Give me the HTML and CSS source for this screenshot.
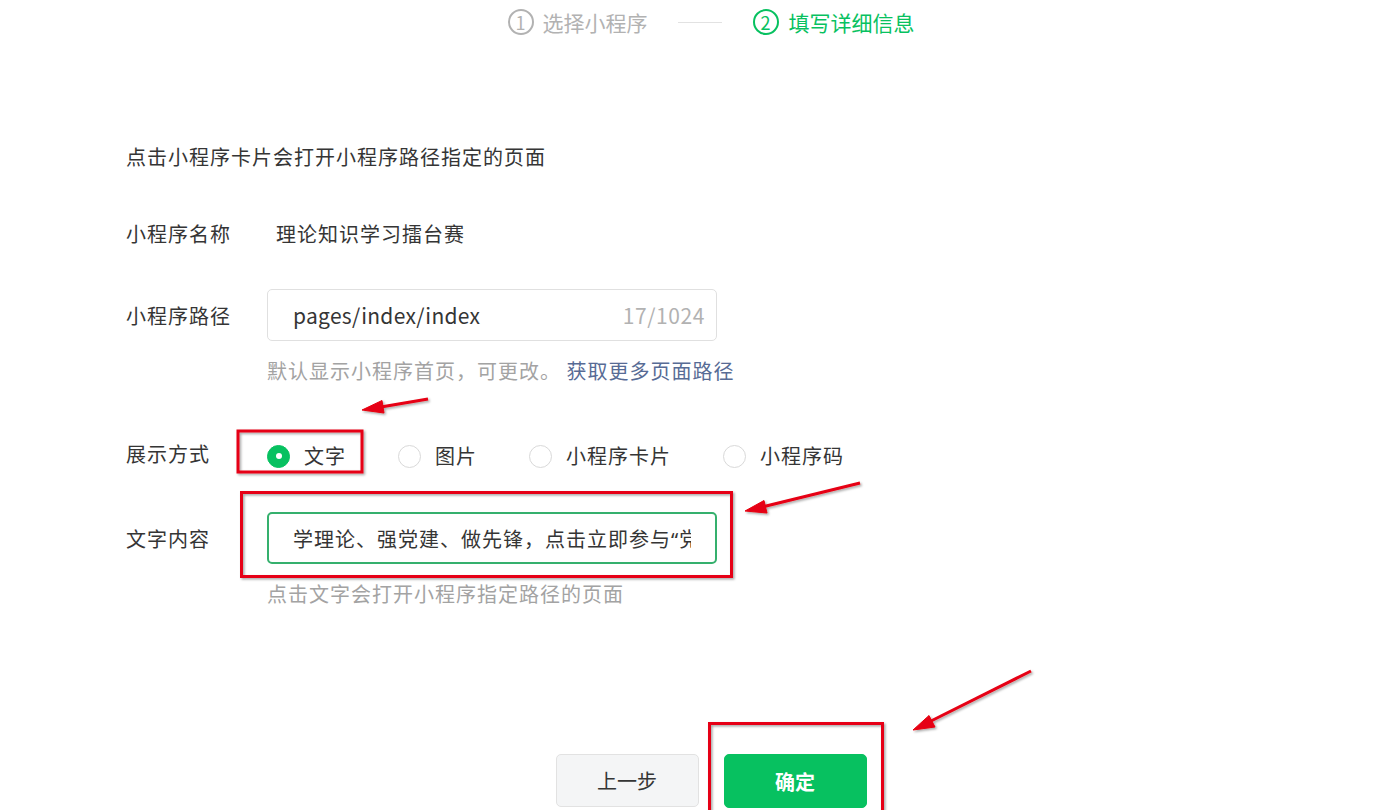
FILE: index.html
```html
<!DOCTYPE html>
<html lang="zh-CN">
<head>
<meta charset="utf-8">
<title>填写详细信息</title>
<link rel="stylesheet" href="styles.css">
</head>
<body>
<div class="page">
  <div class="steps">
    <div class="step done">
      <span class="step-num">1</span>
      <span class="step-text">选择小程序</span>
    </div>
    <div class="step-line"></div>
    <div class="step active">
      <span class="step-num">2</span>
      <span class="step-text">填写详细信息</span>
    </div>
  </div>

  <div class="form">
    <p class="desc">点击小程序卡片会打开小程序路径指定的页面</p>

    <div class="row row-name">
      <div class="label">小程序名称</div>
      <div class="value">理论知识学习擂台赛</div>
    </div>

    <div class="row row-input">
      <div class="label">小程序路径</div>
      <div class="input">
        <span class="input-text">pages/index/index</span>
        <span class="counter">17/1024</span>
      </div>
    </div>
    <div class="hint">默认显示小程序首页，可更改。 <a class="link">获取更多页面路径</a></div>

    <div class="row row-radio">
      <div class="label">展示方式</div>
      <div class="radios">
        <label class="radio checked"><span class="dot"></span>文字</label>
        <label class="radio"><span class="dot"></span>图片</label>
        <label class="radio"><span class="dot"></span>小程序卡片</label>
        <label class="radio"><span class="dot"></span>小程序码</label>
      </div>
    </div>

    <div class="row row-input row-text">
      <div class="label">文字内容</div>
      <div class="input focus">
        <span class="input-text clip">学理论、强党建、做先锋，点击立即参与“党员知识学习擂台赛”</span>
      </div>
    </div>
    <div class="hint">点击文字会打开小程序指定路径的页面</div>
  </div>

  <div class="actions">
    <button class="btn btn-default">上一步</button>
    <button class="btn btn-primary">确定</button>
  </div>
</div>

<svg class="marks" width="1380" height="810" viewBox="0 0 1380 810" xmlns="http://www.w3.org/2000/svg">
  <defs>
    <filter id="sh" x="-20%" y="-20%" width="140%" height="140%">
      <feDropShadow dx="1.5" dy="1.5" stdDeviation="1.2" flood-color="#000" flood-opacity="0.35"/>
    </filter>
  </defs>
  <g filter="url(#sh)" fill="none" stroke="#e60012" stroke-width="3">
    <rect x="238" y="431" width="124" height="41"/>
    <rect x="241.5" y="492.5" width="490" height="84"/>
    <rect x="709.5" y="723.5" width="173" height="90"/>
  </g>
  <g filter="url(#sh)" fill="#e60012" stroke="#e60012">
    <line x1="428" y1="399" x2="378" y2="407.5" stroke-width="3"/>
    <polygon points="362,410 382,400.5 384,413" stroke-width="1"/>
    <line x1="860" y1="483" x2="760" y2="507.5" stroke-width="3"/>
    <polygon points="745,511 764,500.5 767,513" stroke-width="1"/>
    <line x1="1031" y1="671" x2="928" y2="722.5" stroke-width="3"/>
    <polygon points="913,730 929,715.5 935,727" stroke-width="1"/>
  </g>
</svg>
</body>
</html>
```

FILE: styles.css
```css
* { box-sizing: border-box; }

html, body {
  margin: 0;
  padding: 0;
  background: #ffffff;
}

body {
  width: 1380px;
  height: 810px;
  overflow: hidden;
  position: relative;
  font-family: "Noto Sans CJK SC", "Noto Sans", sans-serif;
  color: #353535;
  font-size: 20px;
}

.page {
  padding-left: 42px;
}

/* steps */
.steps {
  height: 44px;
  display: flex;
  align-items: center;
  justify-content: center;
}

.step {
  display: flex;
  align-items: center;
  gap: 9px;
  font-size: 21px;
  line-height: 28px;
  color: #b2b2b2;
}

.step.active {
  color: #07c160;
  gap: 10px;
}

.step-num {
  width: 26px;
  height: 26px;
  border: 2px solid currentColor;
  border-radius: 50%;
  display: flex;
  align-items: center;
  justify-content: center;
  font-size: 18px;
  line-height: 1;
}

.step-line {
  width: 44px;
  height: 1px;
  background: #e2e2e2;
  margin: 0 31px 0 30px;
}

/* form */
.form {
  padding-left: 84px;
}

.desc {
  margin: 98px 0 0;
  line-height: 30px;
  font-size: 20px;
  letter-spacing: 1px;
}

.row {
  display: flex;
  align-items: center;
}

.label {
  width: 141px;
  flex: none;
  font-size: 20px;
  line-height: 30px;
  letter-spacing: 1px;
}

.row-name {
  margin-top: 47px;
}

.value {
  padding-left: 9px;
  line-height: 30px;
  font-size: 20px;
  letter-spacing: 1px;
}

.row-input {
  margin-top: 40px;
}

.row-input .label {
  position: relative;
  top: 1px;
}

.input {
  width: 450px;
  height: 52px;
  border: 1px solid #e0e0e0;
  border-radius: 5px;
  display: flex;
  align-items: center;
  justify-content: space-between;
  padding: 0 11px 0 25px;
}

.input.focus {
  border: 2px solid #35b06d;
  padding: 0 24px 0 24px;
}

.input-text {
  font-size: 21px;
  letter-spacing: 0.3px;
  color: #353535;
  white-space: nowrap;
}

.input-text.clip {
  overflow: hidden;
  flex: 1;
  font-family: "Noto Sans", "Noto Sans CJK SC", sans-serif;
  font-size: 20px;
  letter-spacing: 1px;
}

.counter {
  font-size: 21px;
  letter-spacing: 0.6px;
  color: #b2b2b2;
}

.hint {
  margin-top: 15px;
  margin-left: 141px;
  line-height: 30px;
  font-size: 20px;
  letter-spacing: 1px;
  color: #a3a3a3;
}

.link {
  color: #576b95;
}

.row-radio {
  margin-top: 55px;
}

.row-radio .label {
  position: relative;
  top: -2px;
}

.radios {
  display: flex;
  align-items: center;
}

.radio {
  display: flex;
  align-items: center;
  gap: 14px;
  font-size: 20px;
  line-height: 30px;
  letter-spacing: 1px;
  margin-right: 52px;
}

.dot {
  width: 23px;
  height: 23px;
  border-radius: 50%;
  border: 1px solid #d9d9d9;
  background: #fff;
  display: flex;
  align-items: center;
  justify-content: center;
}

.radio.checked .dot {
  background: #07c160;
  border-color: #07c160;
}

.radio.checked .dot::after {
  content: "";
  width: 6px;
  height: 6px;
  border-radius: 50%;
  background: #fff;
}

.row-text {
  margin-top: 41px;
}

/* buttons */
.actions {
  margin-top: 145px;
  display: flex;
  justify-content: center;
  gap: 25px;
}

.btn {
  width: 143px;
  height: 53px;
  border-radius: 5px;
  font-family: "Noto Sans CJK SC", "Noto Sans", sans-serif;
  font-size: 20px;
  cursor: pointer;
}

.btn-default {
  background: #f4f5f6;
  border: 1px solid #e2e2e2;
  color: #353535;
}

.btn-primary {
  background: #07c160;
  border: 1px solid #07c160;
  color: #fff;
  font-weight: bold;
  height: 54px;
}

.marks {
  position: absolute;
  left: 0;
  top: 0;
  pointer-events: none;
}
```
